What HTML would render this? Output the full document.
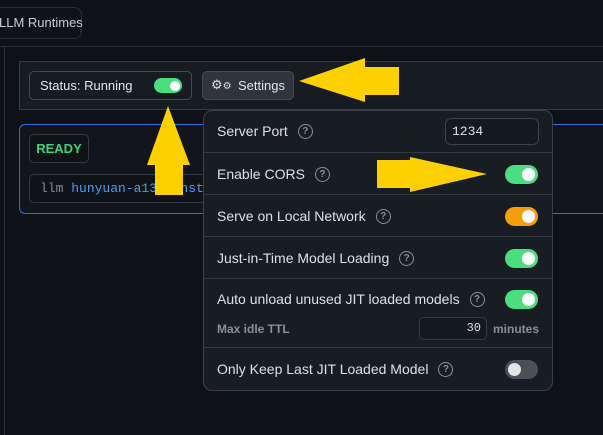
<!DOCTYPE html><html><head><style>
body{margin:0;width:603px;height:435px;background:#0e1117;font-family:"Liberation Sans",sans-serif;position:relative;overflow:hidden;color:#d8dbe0}
.a{position:absolute;box-sizing:border-box;white-space:nowrap}
.q{display:inline-block;width:15px;height:15px;border:1.5px solid #8a8f98;border-radius:50%;font-size:10px;line-height:13px;text-align:center;color:#8a8f98;vertical-align:middle;margin-left:10px;box-sizing:border-box;font-weight:bold;position:relative;top:-1px}
.row{position:absolute;left:0;right:0;border-top:1px solid #323842;font-size:14px;padding-left:13px;color:#dde0e5;white-space:nowrap}
.tg{position:absolute;right:14px;width:33px;height:19px;border-radius:10px;background:#4ade80}
.tg::after{content:"";position:absolute;right:3px;top:3px;width:13px;height:13px;border-radius:50%;background:#fff}
.off::after{left:3px;right:auto;background:#e5e5e5}
.sm::after{width:10px;height:10px;top:2.5px;right:2.5px}
</style></head><body>
<div class="a" style="left:-12px;top:7px;width:94px;height:32px;border:1px solid #2a2f37;border-radius:8px;font-size:13px;line-height:30px;padding-left:10px;color:#c9ccd2">LLM Runtimes</div>
<div class="a" style="left:0;top:46px;width:603px;height:1px;background:#2a2f37"></div>
<div class="a" style="left:4px;top:47px;width:1px;height:388px;background:#2a2f37"></div>
<div class="a" style="left:19px;top:61px;width:600px;height:49px;border:1px solid #353b45;background:#171b22"></div>
<div class="a" style="left:29px;top:71px;width:163px;height:29px;border:1px solid #454b55;border-radius:5px;font-size:13px;line-height:27px;padding-left:10px;color:#e3e6ea">Status: Running</div>
<div class="tg sm" style="left:154px;top:78px;right:auto;width:28px;height:15px"></div>
<div class="a" style="left:202px;top:71px;width:92px;height:29px;background:#30343b;border:1px solid #454b55;border-radius:5px;font-size:13px;line-height:27px;padding-left:35px;color:#e3e6ea">Settings</div>
<div class="a" style="left:211px;top:78px;font-size:13px;color:#ddd;line-height:14px">⚙<span style="font-size:10px">⚙</span></div>
<div class="a" style="left:19px;top:124px;width:600px;height:90px;border:1px solid #2e6fe0;border-radius:6px;background:#12161c"></div>
<div class="a" style="left:29px;top:134px;width:60px;height:29px;border:1px solid #333944;border-radius:5px;font-size:13px;line-height:27px;text-align:center;color:#3fd47a;font-weight:bold;background:#0f1318">READY</div>
<div class="a" style="left:29px;top:174px;width:200px;height:29px;border:1px solid #333944;border-radius:5px;font-family:'Liberation Mono',monospace;font-size:13px;line-height:27px;padding-left:10px;color:#888;background:#0f1318;overflow:hidden">llm <span style="color:#4a9cf0">hunyuan-a13b-instruct</span></div>
<div class="a" style="left:203px;top:110px;width:350px;height:281px;border:1px solid #3a404a;border-radius:9px;background:#181c23;overflow:hidden">
<div class="row" style="top:0;height:41px;border-top:none;line-height:41px">Server Port<span class="q">?</span>
<div class="a" style="left:241px;top:7px;width:94px;height:27px;border:1px solid #3d434d;border-radius:6px;line-height:25px;padding-left:6px;font-family:'Liberation Mono',monospace;font-size:13px;background:#141820">1234</div></div>
<div class="row" style="top:41px;height:42px;line-height:42px">Enable CORS<span class="q">?</span><div class="tg" style="top:12px"></div></div>
<div class="row" style="top:83px;height:42px;line-height:42px">Serve on Local Network<span class="q">?</span><div class="tg" style="top:12px;background:#f59e0b"></div></div>
<div class="row" style="top:125px;height:42px;line-height:42px">Just-in-Time Model Loading<span class="q">?</span><div class="tg" style="top:12px"></div></div>
<div class="row" style="top:167px;height:69px;line-height:40px">Auto unload unused JIT loaded models<span class="q">?</span><div class="tg" style="top:11px"></div>
<div class="a" style="left:13px;top:40px;font-size:12px;font-weight:bold;color:#8b9098;line-height:20px">Max idle TTL</div>
<div class="a" style="left:215px;top:38px;width:68px;height:23px;border:1px solid #333944;border-radius:5px;font-family:'Liberation Mono',monospace;font-size:12px;line-height:21px;text-align:right;padding-right:5px;background:#141820">30</div>
<div class="a" style="left:289px;top:40px;font-size:12px;font-weight:bold;color:#8b9098;line-height:20px">minutes</div></div>
<div class="row" style="top:236px;height:45px;line-height:42px">Only Keep Last JIT Loaded Model<span class="q">?</span><div class="tg off" style="top:12px;background:#4b4f56"></div></div>
</div>
<svg class="a" style="left:0;top:0" width="603" height="435"><g fill="#fdd000">
<polygon points="299,81 365,58 365,67 399,67 399,95 365,95 365,102"/>
<polygon points="168,106 190,165 183,165 183,195 155,195 155,165 147,165"/>
<polygon points="487,174 410,157 410,160 377,160 377,188 410,188 410,192"/></g></svg>
</body></html>
